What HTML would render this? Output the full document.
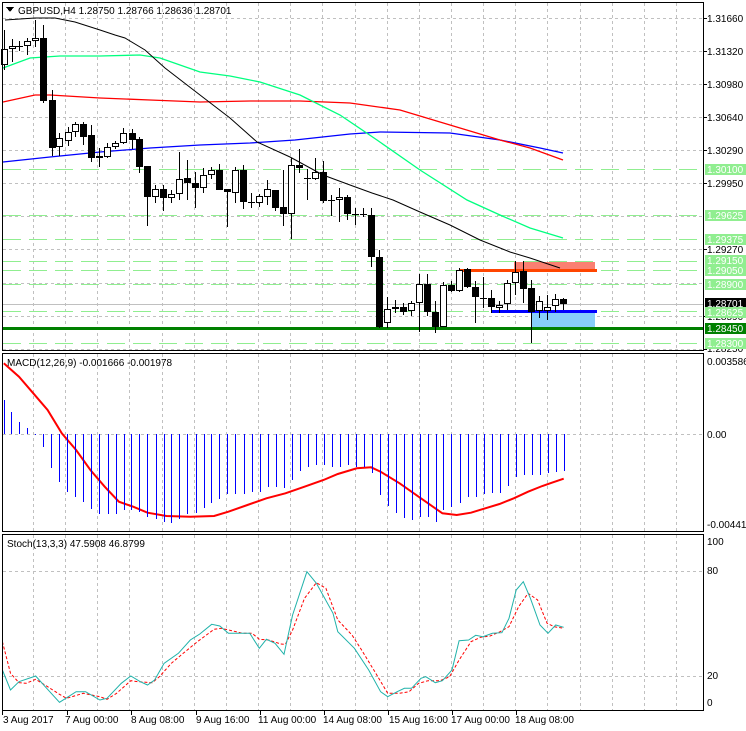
<!DOCTYPE html>
<html><head><meta charset="utf-8"><style>
html,body{margin:0;padding:0;background:#fff;}
svg{display:block;font-family:"Liberation Sans",sans-serif;font-size:10px;}
</style></head><body>
<svg id="s" width="746" height="731" viewBox="0 0 746 731" xmlns="http://www.w3.org/2000/svg" shape-rendering="crispEdges">
<rect width="746" height="731" fill="#fff"/>
<g id="grid" stroke="#c0c0c0" stroke-dasharray="3,3" stroke-width="1"></g>
<g id="levels"></g>
<g id="ind" shape-rendering="auto"></g>
<g id="candles"></g>
<g id="frames" fill="none" stroke="#000" stroke-width="1">
<rect x="2.5" y="2.5" width="701" height="348"/>
<rect x="2.5" y="353.5" width="701" height="178"/>
<rect x="2.5" y="534.5" width="701" height="176"/>
</g>
<g id="labels" font-size="10"></g>
<g id="text" fill="#000" font-size="10">
<path d="M6 7 L14 7 L10 12 Z" fill="#000"/>
<text x="18" y="14" font-size="10">GBPUSD,H4  1.28750 1.28766 1.28636 1.28701</text>
<text x="7" y="366">MACD(12,26,9) -0.001666 -0.001978</text>
<text x="7" y="547">Stoch(13,3,3) 47.5908 46.8799</text>
<text x="707" y="365">0.003586</text>
<text x="707" y="438">0.00</text>
<text x="707" y="528">-0.004419</text>
<text x="707" y="545">100</text>
<text x="707" y="574">80</text>
<text x="707" y="679">20</text>
<text x="707" y="706">0</text>
<text x="3" y="723">3 Aug 2017</text>
<text x="65" y="723">7 Aug 00:00</text>
<text x="131" y="723">8 Aug 08:00</text>
<text x="196" y="723">9 Aug 16:00</text>
<text x="258" y="723">11 Aug 00:00</text>
<text x="323" y="723">14 Aug 08:00</text>
<text x="389" y="723">15 Aug 16:00</text>
<text x="451" y="723">17 Aug 00:00</text>
<text x="515" y="723">18 Aug 08:00</text>
<text x="707" y="22">1.31660</text>
<text x="707" y="55">1.31320</text>
<text x="707" y="88">1.30980</text>
<text x="707" y="121">1.30640</text>
<text x="707" y="154">1.30290</text>
<text x="707" y="187">1.29950</text>
<text x="707" y="253">1.29270</text>
<text x="707" y="320">1.28590</text>
<text x="707" y="352">1.28250</text>
</g>
<g id="tags" font-size="10"></g>
</svg>
<script>
var NS="http://www.w3.org/2000/svg";
function el(p,t,a,txt){var e=document.createElementNS(NS,t);for(var k in a)e.setAttribute(k,a[k]);if(txt!=null)e.textContent=txt;document.getElementById(p).appendChild(e);return e;}
var hy=[18,51,84,117,150,183,216,249,283,316,349];
hy.forEach(function(y){el("grid","line",{x1:3,x2:703,y1:y+.5,y2:y+.5});});
[434,571,676].forEach(function(y){el("grid","line",{x1:3,x2:703,y1:y+.5,y2:y+.5});});
for(var k=0;k<=20;k++){var x=Math.round(33+32.15*k)+.5;
 el("grid","line",{x1:x,x2:x,y1:3,y2:350});el("grid","line",{x1:x,x2:x,y1:354,y2:531});el("grid","line",{x1:x,x2:x,y1:535,y2:710});}
[18,51,84,117,150,183,249,316,349].forEach(function(y){el("frames","line",{x1:703,x2:707,y1:y+.5,y2:y+.5});});
[2,67,131,196,260,324,388,452,516].forEach(function(x){el("frames","line",{x1:x+.5,x2:x+.5,y1:711,y2:715});});
[169,215,239,261,270,284,311,343].forEach(function(y){el("levels","line",{x1:3,x2:703,y1:y+.5,y2:y+.5,stroke:"#90ee90","stroke-dasharray":"18,8"});});
el("levels","line",{x1:3,x2:703,y1:304.5,y2:304.5,stroke:"#c0c0c0"});
el("levels","rect",{x:514,y:262,width:81,height:8,fill:"#fa8072"});
el("levels","rect",{x:531,y:312,width:64,height:15,fill:"#87cefa"});
el("levels","rect",{x:460,y:269,width:137,height:3,fill:"#ff4500"});
el("levels","rect",{x:491,y:310,width:106,height:3,fill:"#0000ff"});
el("levels","rect",{x:3,y:327,width:700,height:3,fill:"#008000"});
function pl(g,pts,col,w,dash){var d=pts.map(function(p,i){return (i?"L":"M")+p[0]+" "+p[1];}).join(" ");var a={d:d,fill:"none",stroke:col,"stroke-width":w};if(dash)a["stroke-dasharray"]=dash;el(g,"path",a);}
pl("ind",[[3,162],[50,157],[100,152],[150,148],[200,145],[250,143],[295,140],[350,134],[380,132],[450,133],[500,140],[540,148],[563,153]],"#0000ff",1.3);
pl("ind",[[3,102],[35,95],[50,95],[100,98],[150,100],[200,102],[250,101],[300,101],[350,103],[400,110],[450,125],[500,140],[530,148],[563,160]],"#ff0000",1.3);
pl("ind",[[3,68],[30,58],[60,56],[100,56],[140,55],[160,58],[200,72],[230,76],[260,82],[300,95],[340,115],[377,140],[420,170],[467,200],[500,215],[530,228],[563,238]],"#00ff7f",1.3);
pl("ind",[[5,20],[35,18],[55,18],[75,22],[100,30],[115,35],[125,38],[145,50],[165,68],[200,95],[230,118],[257,142],[290,157],[323,175],[350,185],[372,193],[393,200],[420,212],[450,225],[480,240],[510,252],[530,258],[560,268]],"#000",1);
var C=[[4,49,65,30,70,0],[12,46,49,39,62,0],[19,46,46,41,51,0],[27,41,46,38,55,0],[35,38,41,20,47,0],[43,38,101,25,103,1],[52,100,148,90,156,1],[59,138,147,133,156,0],[68,132,141,127,146,0],[75,124,132,122,137,0],[83,124,137,122,145,1],[91,135,158,125,162,1],[99,156,158,148,167,0],[107,147,157,143,158,0],[115,143,147,141,149,0],[123,133,143,128,144,0],[132,133,140,129,149,1],[139,139,167,137,173,1],[147,166,197,166,226,1],[155,189,197,185,203,0],[163,189,198,185,211,1],[171,194,198,190,203,0],[179,179,194,152,200,0],[187,178,183,160,200,1],[195,183,188,172,208,1],
[203,175,188,168,193,0],[211,170,175,167,179,0],[219,170,190,164,190,1],[227,189,192,189,227,1],[235,170,193,167,203,0],[243,170,202,165,209,1],[251,202,202,193,208,1],[259,196,203,194,207,0],[267,189,197,180,205,0],[275,190,208,190,211,1],[283,207,214,170,226,1],[291,165,214,158,239,0],[299,165,168,149,173,1],[307,178,178,169,200,1],[315,172,179,158,180,0],[323,172,201,161,203,1],[331,200,200,195,216,1],[339,197,200,188,222,0],[347,197,214,195,220,1],[355,214,214,208,225,1],[363,214,214,208,217,1],[371,215,257,208,267,1],[379,257,327,250,328,1],[387,309,323,297,328,0],
[395,307,309,300,313,0],[403,307,312,303,315,1],[411,303,311,301,316,0],[419,284,303,274,332,0],[427,284,312,274,316,1],[435,312,327,301,333,1],[443,285,327,282,327,0],[451,285,291,281,292,1],[459,270,291,268,292,0],[467,269,287,268,288,1],[475,287,297,281,323,1],[483,298,298,277,308,1],[491,298,307,290,313,1],[499,305,308,301,313,0],[507,283,304,280,310,0],[515,272,283,261,295,0],[523,271,289,261,303,1],[531,288,312,280,343,1],[539,301,311,296,318,0],[547,307,311,295,320,0],[555,299,306,294,312,0],[563,299,304,298,310,1]];
C.forEach(function(c){var x=c[0];
 el("candles","rect",{x:x,y:c[3],width:1,height:c[4]-c[3],fill:"#000"});
 var h=Math.max(1,c[2]-c[1]);
 if(h<=1){el("candles","rect",{x:x-3,y:c[1],width:7,height:1,fill:"#000"});}
 else el("candles","rect",{x:x-3+.5,y:c[1]+.5,width:6,height:h-1,fill:c[5]?"#000":"#fff",stroke:"#000"});
});
var H=[[8,400],[24,412],[40,422],[57,428],[74,435],[91,447],[107,468],[124,482],[141,492],[158,497],[175,502],[192,509],[209,514],[226,514],[243,514],[260,510],[276,510],[293,512],[310,517],[327,519],[344,522],[360,523],[377,519],[394,514],[411,513],[428,508],[444,503],[461,499],[478,494],[495,494],[512,494],[529,492],[546,492],[563,487],[580,487],[597,488],[613,480],[630,471],[647,467],[664,465],[681,465],[698,467],[714,467],[731,465],[748,467],[765,467],[781,473],[798,495],[815,506],[832,513],[849,518],[865,520],[882,517],[899,517],[916,522],[932,510],[949,507],[966,503],[983,497],[1000,497],[1017,494],[1034,493],[1051,493],[1068,486],[1084,477],[1101,475],[1118,475],[1135,475],[1152,473],[1168,472],[1185,471]];
H.forEach(function(b){var x=Math.round(b[0]/2.102)+.5;el("candles","line",{x1:x,x2:x,y1:434,y2:b[1],stroke:"#0000ff"});});
var M=[[8,70],[40,110],[70,160],[100,210],[130,280],[160,330],[190,390],[220,440],[250,485],[280,500],[310,518],[350,528],[400,530],[450,528],[480,515],[520,495],[560,475],[600,460],[640,440],[680,420],[710,402],[750,385],[780,382],[800,395],[840,430],[880,470],[910,500],[930,520],[960,525],[990,518],[1020,505],[1050,492],[1080,475],[1110,455],[1140,438],[1160,428],[1185,416]];
pl("ind",M.map(function(p){return [(p[0]/2.102).toFixed(1),(p[1]/3+340).toFixed(1)];}),"#ff0000",2);
var T=[[5,420],[22,480],[40,455],[75,438],[95,470],[125,517],[160,485],[180,485],[210,510],[225,505],[255,460],[275,438],[295,455],[310,465],[325,450],[345,400],[375,370],[400,330],[420,312],[445,283],[462,288],[480,310],[525,310],[545,355],[560,328],[578,340],[597,373],[615,255],[645,125],[665,160],[700,250],[710,305],[745,355],[775,420],[800,485],[815,500],[835,485],[850,475],[865,475],[885,445],[895,440],[915,458],[930,452],[950,420],[965,332],[985,330],[1000,316],[1015,320],[1035,310],[1055,308],[1070,265],[1085,180],[1100,155],[1115,205],[1135,285],[1152,310],[1168,285],[1185,292]];
var R=[[5,335],[22,430],[40,458],[55,460],[75,448],[100,470],[125,493],[140,505],[175,490],[210,500],[225,508],[245,490],[275,452],[290,455],[320,458],[335,440],[360,400],[385,370],[415,335],[450,298],[465,295],[490,303],[510,310],[530,310],[545,328],[565,330],[590,342],[600,343],[615,300],[640,205],[665,158],[685,175],[710,270],[740,315],[760,360],[790,430],[815,490],[840,490],[860,485],[880,460],[900,452],[925,452],[945,440],[965,390],[990,335],[1010,322],[1030,318],[1050,306],[1070,290],[1090,230],[1110,190],[1130,210],[1150,280],[1165,290],[1185,295]];
function cv(p){return [(p[0]/2.102).toFixed(1),(p[1]/3+530).toFixed(1)];}
pl("ind",R.map(cv),"#ff0000",1,"3,2");
pl("ind",T.map(cv),"#20b2aa",1);
function tag(y,txt,bg,fg){el("tags","rect",{x:705,y:y-5,width:41,height:11,fill:bg});el("tags","text",{x:707,y:y+4,fill:fg},txt);}
tag(169,"1.30100","#90ee90","#fff");tag(215,"1.29625","#90ee90","#fff");tag(239,"1.29375","#90ee90","#fff");
tag(260,"1.29150","#90ee90","#fff");tag(270,"1.29050","#90ee90","#fff");tag(284,"1.28900","#90ee90","#fff");
tag(303,"1.28701","#000","#fff");tag(312,"1.28625","#90ee90","#fff");tag(328,"1.28450","#008000","#fff");tag(343,"1.28300","#90ee90","#fff");
</script>
</body></html>
